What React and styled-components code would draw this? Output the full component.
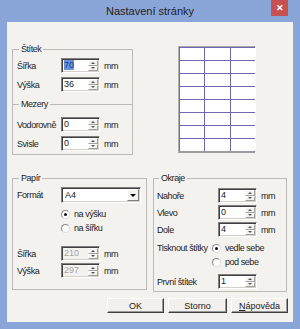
import React from 'react'
import styled, { createGlobalStyle } from 'styled-components'

const GlobalStyle = createGlobalStyle`
  html, body {
    margin: 0;
    padding: 0;
    background: #8aa6d8;
  }
`

const Frame = styled.div`
  width: 300px;
  height: 329px;
  box-sizing: border-box;
  padding: 0 7px 7px;
  background: #8aa6d8;
  display: flex;
  flex-direction: column;
  font-family: 'Liberation Sans', Arial, sans-serif;
  font-size: 9px;
  letter-spacing: -0.45px;
  color: #222;
`

const TitleBar = styled.div`
  position: relative;
  height: 22px;
  display: flex;
  align-items: center;
  justify-content: center;
  font-size: 11px;
  letter-spacing: 0;
  color: #1e1e1e;
`

const CloseButton = styled.div`
  position: absolute;
  top: 0;
  right: 5px;
  width: 17px;
  height: 16px;
  background: #c75050;
  color: #fff;
  display: flex;
  align-items: center;
  justify-content: center;
  font-size: 9px;
  font-weight: bold;
`

const Client = styled.div`
  flex: 1;
  background: #f4f2ef;
  box-sizing: border-box;
  padding: 22px 5px 9px;
  display: flex;
  flex-direction: column;
`

const TopRow = styled.div`
  display: flex;
  align-items: flex-start;
`

const LeftColumn = styled.div`
  width: 121px;
  display: flex;
  flex-direction: column;
`

const Group = styled.fieldset`
  margin: 0;
  margin-top: ${p => p.$overlap || 0}px;
  width: ${p => p.$width}px;
  box-sizing: border-box;
  border: 1px solid #bdbab4;
  border-bottom: ${p => (p.$open ? 'none' : '1px solid #bdbab4')};
  padding: ${p => p.$pad};
  min-inline-size: 0;
`

const Legend = styled.legend`
  padding: 0 2px;
  margin-left: 2px;
  line-height: 10px;
`

const Rows = styled.div`
  display: flex;
  flex-direction: column;
  gap: ${p => p.$gap}px;
`

const Row = styled.div`
  display: flex;
  align-items: center;
  height: ${p => p.$h || 15}px;
  margin-top: ${p => p.$mt || 0}px;
`

const Label = styled.div`
  width: ${p => p.$w}px;
  flex-shrink: 0;
  white-space: nowrap;
`

const Unit = styled.span`
  margin-left: 4px;
`

const SpinBox = styled.div`
  width: 39px;
  height: 15px;
  box-sizing: border-box;
  display: flex;
  border-top: 1px solid #808080;
  border-left: 1px solid #808080;
  border-right: 1px solid #fff;
  border-bottom: 1px solid #fff;
  box-shadow: inset 1px 1px 0 #404040, inset -1px -1px 0 #d4d0c8;
  background: ${p => (p.$disabled ? '#f4f2ef' : '#fff')};
`

const SpinValue = styled.div`
  flex: 1;
  padding-left: 2px;
  line-height: 13px;
  letter-spacing: 0;
  color: ${p => (p.$disabled ? '#a3a3a3' : '#222')};
`

const Selected = styled.span`
  background: #6b92d8;
  color: #203c8a;
`

const SpinButtons = styled.div`
  width: 11px;
  display: flex;
  flex-direction: column;
  padding: 1px 1px 1px 0;
  box-sizing: border-box;
`

const SpinHalf = styled.div`
  flex: 1;
  background: #f3f2ef;
  border: 1px solid #fff;
  border-right-color: #a0a0a0;
  border-bottom-color: #a0a0a0;
  display: flex;
  align-items: center;
  justify-content: center;
  &::after {
    content: '';
    border-left: 2px solid transparent;
    border-right: 2px solid transparent;
    ${p => (p.$up ? 'border-bottom: 2px solid #555;' : 'border-top: 2px solid #555;')}
  }
`

const Spin = ({ value, disabled, selected }) => (
  <SpinBox $disabled={disabled}>
    <SpinValue $disabled={disabled}>
      {selected ? <Selected>{value}</Selected> : value}
    </SpinValue>
    <SpinButtons>
      <SpinHalf $up />
      <SpinHalf />
    </SpinButtons>
  </SpinBox>
)

const Preview = styled.div`
  margin-left: 45px;
  margin-top: 2px;
  width: 77px;
  height: 107px;
  box-sizing: border-box;
  border-top: 1px solid #a9a9a9;
  border-left: 1px solid #b4b4b4;
  border-right: 1px solid #6e66b3;
  border-bottom: 2px solid #9c9c9c;
  background: #6e66b3;
  padding: 1px 0 0 1px;
  display: grid;
  grid-template-columns: 24px 25px 25px;
  grid-template-rows: repeat(8, 1fr);
  gap: 1px;
`

const Cell = styled.div`
  background: #fff;
`

const MiddleRow = styled.div`
  display: flex;
  gap: 6px;
  margin-top: 18px;
  align-items: flex-start;
`

const Select = styled.div`
  width: 80px;
  height: 16px;
  box-sizing: border-box;
  display: flex;
  background: #fff;
  border-top: 1px solid #808080;
  border-left: 1px solid #808080;
  border-right: 1px solid #fff;
  border-bottom: 1px solid #fff;
  box-shadow: inset 1px 1px 0 #404040, inset -1px -1px 0 #d4d0c8;
`

const SelectValue = styled.div`
  flex: 1;
  padding-left: 3px;
  line-height: 14px;
  letter-spacing: 0;
`

const SelectArrow = styled.div`
  width: 12px;
  margin: 1px 1px 1px 0;
  box-sizing: border-box;
  background: #f3f2ef;
  border: 1px solid #fff;
  border-right-color: #808080;
  border-bottom-color: #808080;
  display: flex;
  align-items: center;
  justify-content: center;
  &::after {
    content: '';
    border-left: 3px solid transparent;
    border-right: 3px solid transparent;
    border-top: 3px solid #000;
  }
`

const RadioRow = styled.div`
  display: flex;
  align-items: center;
  height: 14px;
  margin-left: ${p => p.$indent || 0}px;
`

const RadioCircle = styled.span`
  width: 9px;
  height: 9px;
  box-sizing: border-box;
  border-radius: 50%;
  border: 1px solid #8a8a8a;
  border-right-color: #dcdcdc;
  border-bottom-color: #dcdcdc;
  background: #fff;
  margin-right: 4px;
  display: flex;
  align-items: center;
  justify-content: center;
  &::after {
    content: '';
    width: 3px;
    height: 3px;
    border-radius: 50%;
    background: ${p => (p.$checked ? '#111' : 'transparent')};
  }
`

const Radio = ({ checked, children, indent }) => (
  <RadioRow $indent={indent}>
    <RadioCircle $checked={checked} />
    {children}
  </RadioRow>
)

const RadioGroup = styled.div`
  margin-top: ${p => p.$mt || 0}px;
`

const PrintRow = styled.div`
  display: flex;
  margin-top: 4px;
`

const PrintLabel = styled.div`
  width: 55px;
  height: 14px;
  line-height: 14px;
  white-space: nowrap;
`

const ButtonRow = styled.div`
  display: flex;
  justify-content: flex-end;
  gap: 4px;
  margin-top: 6px;
`

const Button = styled.div`
  width: ${p => p.$w}px;
  height: 15px;
  box-sizing: border-box;
  background: #f2f1ee;
  border-top: 1px solid #fff;
  border-left: 1px solid #fff;
  border-right: 1px solid #404040;
  border-bottom: 1px solid #404040;
  box-shadow: inset -1px -1px 0 #9a9a9a;
  display: flex;
  align-items: center;
  justify-content: center;
  letter-spacing: 0;
`

const Accel = styled.span`
  text-decoration: underline;
`

const App = () => {
  return (
    <>
      <GlobalStyle />
      <Frame>
        <TitleBar>
          Nastavení stránky
          <CloseButton>✕</CloseButton>
        </TitleBar>
        <Client>
          <TopRow>
            <LeftColumn>
              <Group $width={121} $open $pad="4px 0 12px 4px">
                <Legend>Štítek</Legend>
                <Rows $gap={4}>
                  <Row>
                    <Label $w={44}>Šířka</Label>
                    <Spin value="70" selected />
                    <Unit>mm</Unit>
                  </Row>
                  <Row>
                    <Label $w={44}>Výška</Label>
                    <Spin value="36" />
                    <Unit>mm</Unit>
                  </Row>
                </Rows>
              </Group>
              <Group $width={121} $overlap={-5} $pad="8px 0 3px 4px">
                <Legend>Mezery</Legend>
                <Rows $gap={4}>
                  <Row>
                    <Label $w={44}>Vodorovně</Label>
                    <Spin value="0" />
                    <Unit>mm</Unit>
                  </Row>
                  <Row>
                    <Label $w={44}>Svisle</Label>
                    <Spin value="0" />
                    <Unit>mm</Unit>
                  </Row>
                </Rows>
              </Group>
            </LeftColumn>
            <Preview>
              {Array.from({ length: 24 }).map((_, i) => (
                <Cell key={i} />
              ))}
            </Preview>
          </TopRow>
          <MiddleRow>
            <Group $width={135} $pad="4px 0 11px 4px">
              <Legend>Papír</Legend>
              <Row $h={16}>
                <Label $w={44}>Formát</Label>
                <Select>
                  <SelectValue>A4</SelectValue>
                  <SelectArrow />
                </Select>
              </Row>
              <RadioGroup $mt={4}>
                <Radio checked indent={44}>na výšku</Radio>
                <Radio indent={44}>na šířku</Radio>
              </RadioGroup>
              <Rows $gap={2}>
                <Row $mt={11}>
                  <Label $w={44}>Šířka</Label>
                  <Spin value="210" disabled />
                  <Unit>mm</Unit>
                </Row>
                <Row>
                  <Label $w={44}>Výška</Label>
                  <Spin value="297" disabled />
                  <Unit>mm</Unit>
                </Row>
              </Rows>
            </Group>
            <Group $width={134} $pad="5px 0 2px 3px">
              <Legend>Okraje</Legend>
              <Rows $gap={2}>
                <Row>
                  <Label $w={61}>Nahoře</Label>
                  <Spin value="4" />
                  <Unit>mm</Unit>
                </Row>
                <Row>
                  <Label $w={61}>Vlevo</Label>
                  <Spin value="0" />
                  <Unit>mm</Unit>
                </Row>
                <Row>
                  <Label $w={61}>Dole</Label>
                  <Spin value="4" />
                  <Unit>mm</Unit>
                </Row>
              </Rows>
              <PrintRow>
                <PrintLabel>Tisknout štítky</PrintLabel>
                <RadioGroup>
                  <Radio checked>vedle sebe</Radio>
                  <Radio>pod sebe</Radio>
                </RadioGroup>
              </PrintRow>
              <Row $mt={5}>
                <Label $w={61}>První štítek</Label>
                <Spin value="1" />
              </Row>
            </Group>
          </MiddleRow>
          <ButtonRow>
            <Button $w={57}>OK</Button>
            <Button $w={59}>Storno</Button>
            <Button $w={57}>
              <Accel>N</Accel>ápověda
            </Button>
          </ButtonRow>
        </Client>
      </Frame>
    </>
  )
}

export default App
